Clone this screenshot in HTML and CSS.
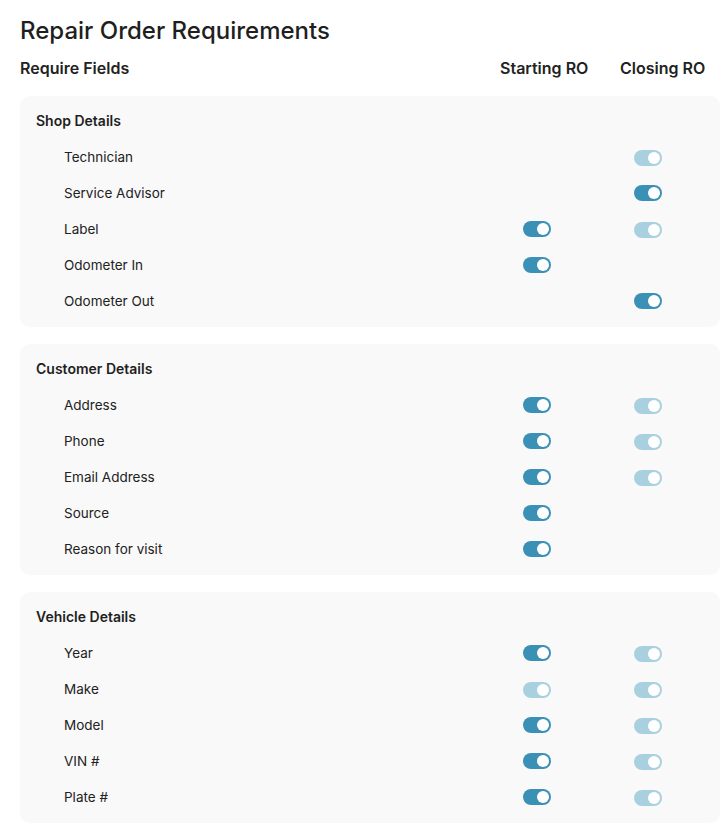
FILE: index.html
```html
<!DOCTYPE html>
<html>
<head>
<meta charset="utf-8">
<link rel="stylesheet" href="styles.css">
</head>
<body>
<div class="page">
  <h1 class="title">Repair Order Requirements</h1>
  <div class="head">
    <div class="head-label">Require Fields</div>
    <div class="head-col start">Starting RO</div>
    <div class="head-col close">Closing RO</div>
  </div>

  <section class="card">
    <h2 class="card-title">Shop Details</h2>
    <div class="row"><span class="label">Technician</span><span class="cell"></span><span class="cell"><i class="tg light"></i></span></div>
    <div class="row"><span class="label">Service Advisor</span><span class="cell"></span><span class="cell"><i class="tg on"></i></span></div>
    <div class="row"><span class="label">Label</span><span class="cell"><i class="tg on"></i></span><span class="cell"><i class="tg light"></i></span></div>
    <div class="row"><span class="label">Odometer In</span><span class="cell"><i class="tg on"></i></span><span class="cell"></span></div>
    <div class="row"><span class="label">Odometer Out</span><span class="cell"></span><span class="cell"><i class="tg on"></i></span></div>
  </section>

  <section class="card">
    <h2 class="card-title">Customer Details</h2>
    <div class="row"><span class="label">Address</span><span class="cell"><i class="tg on"></i></span><span class="cell"><i class="tg light"></i></span></div>
    <div class="row"><span class="label">Phone</span><span class="cell"><i class="tg on"></i></span><span class="cell"><i class="tg light"></i></span></div>
    <div class="row"><span class="label">Email Address</span><span class="cell"><i class="tg on"></i></span><span class="cell"><i class="tg light"></i></span></div>
    <div class="row"><span class="label">Source</span><span class="cell"><i class="tg on"></i></span><span class="cell"></span></div>
    <div class="row"><span class="label">Reason for visit</span><span class="cell"><i class="tg on"></i></span><span class="cell"></span></div>
  </section>

  <section class="card">
    <h2 class="card-title">Vehicle Details</h2>
    <div class="row"><span class="label">Year</span><span class="cell"><i class="tg on"></i></span><span class="cell"><i class="tg light"></i></span></div>
    <div class="row"><span class="label">Make</span><span class="cell"><i class="tg light"></i></span><span class="cell"><i class="tg light"></i></span></div>
    <div class="row"><span class="label">Model</span><span class="cell"><i class="tg on"></i></span><span class="cell"><i class="tg light"></i></span></div>
    <div class="row"><span class="label">VIN #</span><span class="cell"><i class="tg on"></i></span><span class="cell"><i class="tg light"></i></span></div>
    <div class="row"><span class="label">Plate #</span><span class="cell"><i class="tg on"></i></span><span class="cell"><i class="tg light"></i></span></div>
  </section>
</div>
</body>
</html>
```

FILE: styles.css
```css
* { box-sizing: border-box; }
html, body { margin: 0; padding: 0; background: #ffffff; }
body {
  font-family: "Inter", "Noto Sans", "Liberation Sans", sans-serif;
  color: #222222;
}
.page {
  padding: 15px 0 0 20px;
  width: 720px;
  display: flex;
  flex-direction: column;
}
.title {
  margin: 0;
  font-size: 24px;
  line-height: 32px;
  font-weight: 500;
  color: #1f1f1f;
}
.head {
  display: flex;
  align-items: center;
  height: 26px;
  margin-top: 8px;
  margin-bottom: 15px;
  font-size: 16px;
  font-weight: 600;
}
.head-label { flex: 1; }
.head-col.start { width: 120px; }
.head-col.close { width: 100px; }
.card {
  background: #f9f9f9;
  border-radius: 10px;
  padding: 16px 0 8px 16px;
  margin-bottom: 17px;
}
.card-title {
  margin: 0;
  font-size: 14px;
  line-height: 18px;
  font-weight: 600;
  height: 18px;
  color: #1f1f1f;
}
.row {
  display: flex;
  align-items: center;
  height: 36px;
  font-size: 13.5px;
  padding-left: 28px;
}
.row:first-of-type { margin-top: 9px; }
.label { flex: 1; }
.cell { width: 111px; display: flex; align-items: center; height: 16px; }
.cell:last-child { width: 86px; }
.tg {
  display: block;
  position: relative;
  width: 28px;
  height: 16px;
  border-radius: 8px;
  background: #3b90b6;
}
.tg::after {
  content: "";
  position: absolute;
  right: 2px;
  top: 2px;
  width: 12px;
  height: 12px;
  border-radius: 50%;
  background: #ffffff;
}
.tg.light { background: #a9d0df; margin-top: 2px; }
```
